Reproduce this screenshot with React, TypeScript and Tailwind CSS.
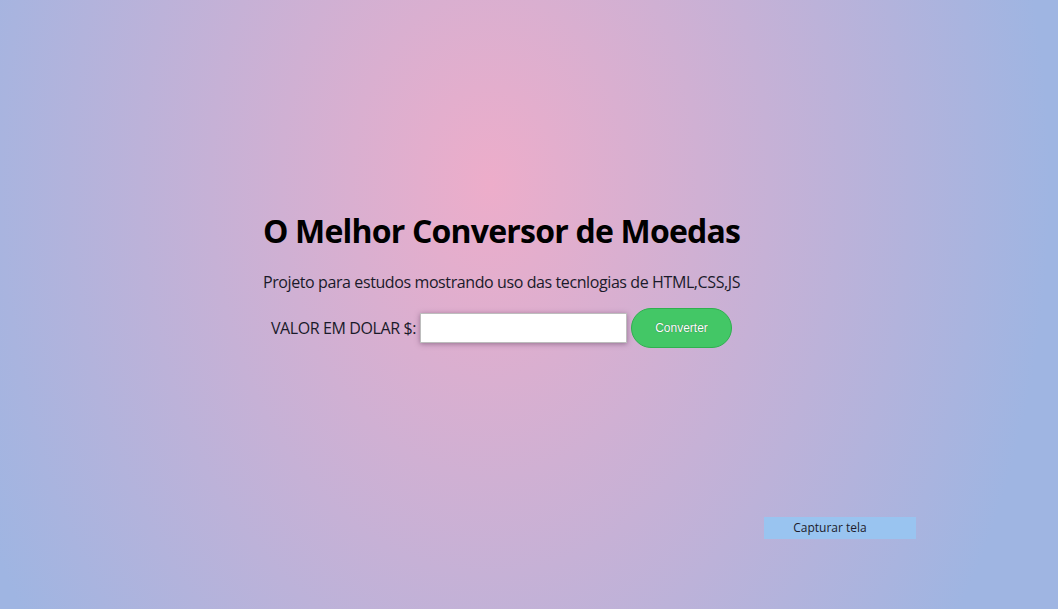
import React from 'react';

const App: React.FC = () => {
  return (
    <div
      className="relative w-full h-[609px] overflow-hidden bg-[radial-gradient(ellipse_560px_780px_at_490px_185px,#edadca_0%,#9fb5e2_100%)]"
      style={{ fontFamily: '"Open Sans", "Noto Sans", sans-serif' }}
    >
      {/* Conversor */}
      <div className="flex flex-col items-center pt-[211px] pr-[55px] text-black">
        <h1 className="text-[32px] leading-[40px] font-bold tracking-[-0.8px]">O Melhor Conversor de Moedas</h1>
        <p className="mt-[20px] text-[16px] leading-[22px] tracking-[-0.4px] text-[#1a1a2a]">
          Projeto para estudos mostrando uso das tecnlogias de HTML,CSS,JS
        </p>
        <div className="mt-[15px] flex items-center">
          <label className="text-[16px] tracking-[-0.4px] text-[#1a1a2a] mr-[4px]">VALOR EM DOLAR $:</label>
          <input
            type="text"
            className="w-[207px] h-[30px] bg-white border border-[#bdbdbd] shadow-[0_1px_5px_rgba(90,60,90,0.55)] outline-none px-2"
          />
          <button
            className="ml-[4px] w-[101px] h-[40px] rounded-full bg-[#43c766] border border-[#2fb04f] text-white text-[12px] [text-shadow:0_0_1px_rgba(0,0,0,0.5)]"
            style={{ fontFamily: '"Liberation Sans", Arial, sans-serif' }}
          >
            Converter
          </button>
        </div>
      </div>

      {/* botao flutuante */}
      <button
        className="absolute left-[764px] top-[517px] w-[152px] h-[22px] bg-[#99c4f0] text-[12px] text-[#1c1c2c] pr-[20px]"
        style={{ fontFamily: '"Open Sans", sans-serif' }}
      >
        Capturar tela
      </button>
    </div>
  );
};

export default App;
